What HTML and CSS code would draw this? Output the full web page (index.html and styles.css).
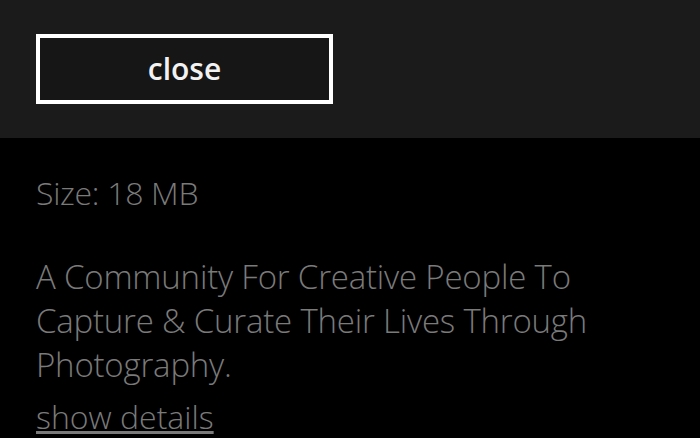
FILE: index.html
```html
<!DOCTYPE html>
<html>
<head>
	<meta charset="UTF-8">
	<title>App details</title>
	<link rel="stylesheet" href="styles.css">
</head>
<body>

<div class="topbar">
	<button class="close-btn">close</button>
</div>

<div class="info">
	<p class="size">Size: 18 MB</p>
	<p class="desc">A Community For Creative People To Capture &amp; Curate Their Lives Through Photography.</p>
	<a class="details" href="#">show details</a>
</div>

</body>
</html>
```

FILE: styles.css
```css
body {
	margin: 0;
	background-color: #000;
	font-family: "Open Sans", "Noto Sans", sans-serif;
	color: #7a7a7a;
}

.topbar {
	background-color: #1b1b1b;
	height: 138px;
	padding: 34px 0 0 36px;
	box-sizing: border-box;
}

.close-btn {
	width: 297px;
	height: 70px;
	border: 4px solid #fff;
	background-color: #161616;
	color: #f2f2f2;
	font-family: "Open Sans", sans-serif;
	font-size: 30px;
	font-weight: 600;
	padding: 0 0 2px 0;
	cursor: pointer;
}

.info {
	padding: 33px 0 0 36px;
	width: 600px;
}

.size {
	margin: 0 0 40px 0;
	font-size: 32px;
	font-weight: 300;
	line-height: 44px;
	letter-spacing: -0.3px;
}

.desc {
	margin: 0;
	font-size: 33px;
	font-weight: 300;
	line-height: 44px;
	letter-spacing: -0.2px;
}

.details {
	display: inline-block;
	margin-top: 10px;
	color: #7a7a7a;
	font-size: 32px;
	font-weight: 300;
	line-height: 40px;
}
```
